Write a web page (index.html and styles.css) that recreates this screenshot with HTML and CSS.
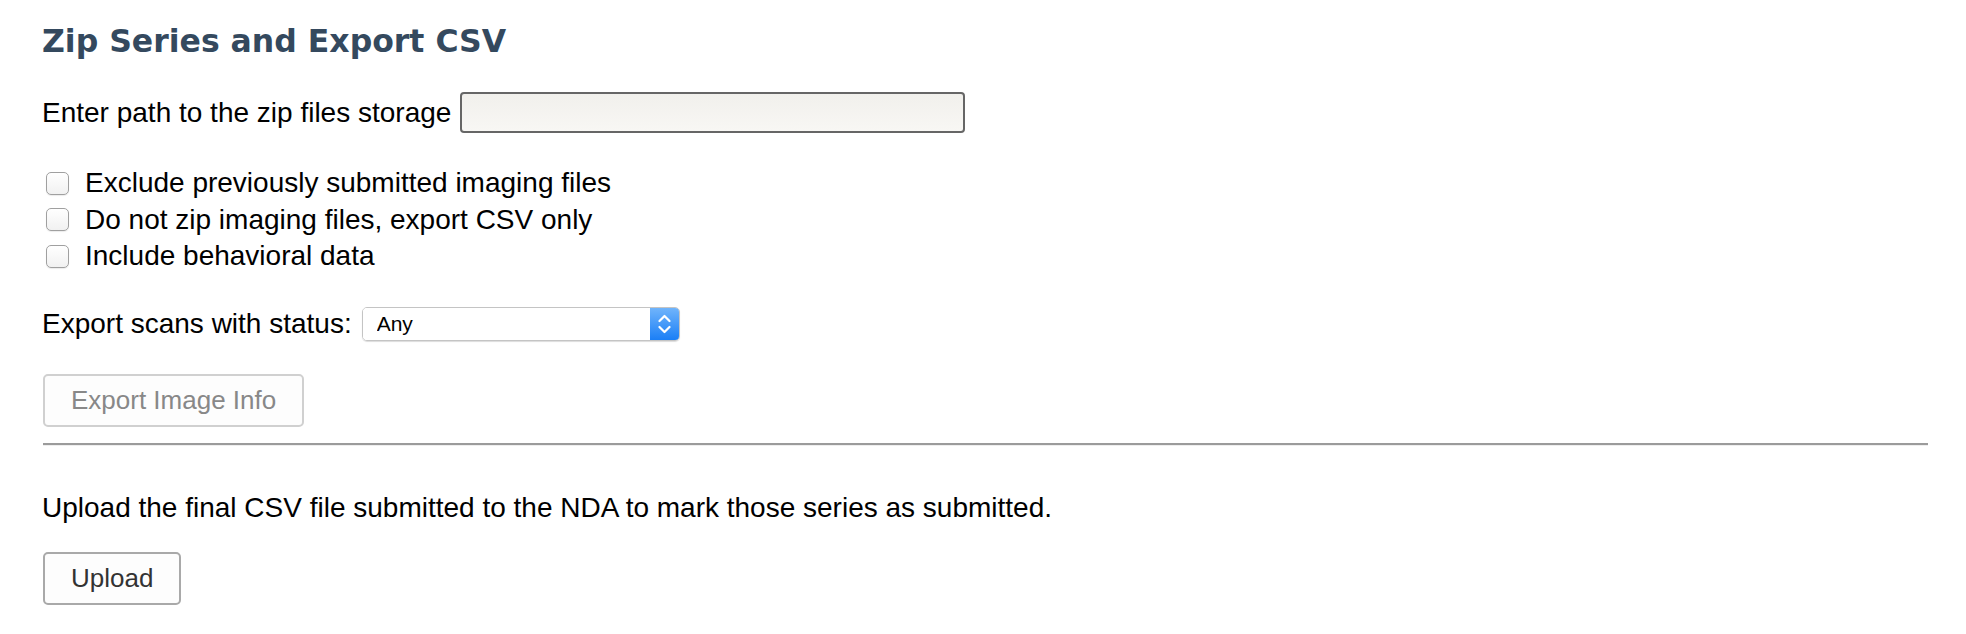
FILE: index.html
```html
<!DOCTYPE html>
<html lang="en">
<head>
    <meta charset="UTF-8">
    <meta name="viewport" content="width=device-width, initial-scale=1.0">
    <title>Zip Series and Export CSV</title>
    <link rel="stylesheet" href="styles.css">
</head>
<body>
    <div class="page">
        <h2 class="title">Zip Series and Export CSV</h2>

        <div class="path-row">
            <label for="zipPath">Enter path to the zip files storage</label>
            <input type="text" id="zipPath" class="path-input">
        </div>

        <div class="options">
            <label class="option"><input type="checkbox" id="excludeSubmitted"><span>Exclude previously submitted imaging files</span></label>
            <label class="option"><input type="checkbox" id="csvOnly"><span>Do not zip imaging files, export CSV only</span></label>
            <label class="option"><input type="checkbox" id="behavioral"><span>Include behavioral data</span></label>
        </div>

        <div class="status-row">
            <label for="status">Export scans with status:</label>
            <div class="select-box">
                <select id="status">
                    <option>Any</option>
                    <option>Pass</option>
                    <option>Fail</option>
                </select>
                <span class="select-arrow">
                    <svg width="13" height="20" viewBox="0 0 13 20">
                        <path d="M1.5 7 L6.5 2 L11.5 7" fill="none" stroke="#fff" stroke-width="2.2" stroke-linecap="round" stroke-linejoin="round"/>
                        <path d="M1.5 13 L6.5 18 L11.5 13" fill="none" stroke="#fff" stroke-width="2.2" stroke-linecap="round" stroke-linejoin="round"/>
                    </svg>
                </span>
            </div>
        </div>

        <button class="btn" id="exportBtn" disabled>Export Image Info</button>

        <hr class="divider">

        <p class="upload-note">Upload the final CSV file submitted to the NDA to mark those series as submitted.</p>
        <button class="btn" id="uploadBtn">Upload</button>
    </div>
</body>
</html>
```

FILE: styles.css
```css
body {
    margin: 0;
    background: #fff;
    color: #000;
    font-family: "Liberation Sans", Arial, Helvetica, sans-serif;
    font-size: 28px;
}
.page {
    padding: 23px 38px 0 42px;
    display: flex;
    flex-direction: column;
    align-items: flex-start;
}
.title {
    margin: 0;
    font-family: "DejaVu Sans", Verdana, sans-serif;
    font-size: 31.5px;
    font-weight: bold;
    line-height: 37px;
    color: #34495e;
}
.path-row {
    margin-top: 32px;
    display: flex;
    align-items: center;
    gap: 9px;
    line-height: 32px;
}
.path-input {
    box-sizing: border-box;
    width: 505px;
    height: 41px;
    margin: 0;
    border: 2px solid #666;
    border-radius: 4px;
    background: linear-gradient(#f1f0ec, #f8f7f4);
    font-size: 22px;
}
.options {
    margin-top: 32px;
    display: flex;
    flex-direction: column;
}
.option {
    height: 36.5px;
    display: flex;
    align-items: center;
    gap: 16px;
    line-height: 32px;
}
.option input {
    appearance: none;
    box-sizing: border-box;
    width: 23px;
    height: 23px;
    margin: 0 0 0 4px;
    border: 1px solid #a0a0a0;
    border-radius: 5px;
    background: linear-gradient(#fff, #f1f1f1);
    box-shadow: 0 1px 1px rgba(0, 0, 0, 0.08);
}
.status-row {
    margin-top: 32px;
    display: flex;
    align-items: center;
    gap: 10px;
    line-height: 32px;
}
.select-box {
    display: flex;
    width: 318px;
    height: 34px;
    box-sizing: border-box;
    border: 1px solid #c4c4c4;
    border-radius: 5px;
    box-shadow: 0 1px 1px rgba(0, 0, 0, 0.14);
    overflow: hidden;
}
.select-box select {
    appearance: none;
    flex: 1;
    border: none;
    outline: none;
    margin: 0;
    padding: 0 0 0 14px;
    background: #fff;
    font-family: "Liberation Sans", Arial, sans-serif;
    font-size: 21px;
    color: #000;
}
.select-arrow {
    width: 29px;
    display: flex;
    align-items: center;
    justify-content: center;
    background: linear-gradient(#70b4fb, #1b7ff6);
}
.btn {
    box-sizing: border-box;
    height: 53px;
    padding: 0 26px;
    margin: 0 0 0 1px;
    border: 2px solid #a9a9a9;
    border-radius: 5px;
    background: #fdfdfd;
    color: #333;
    font-family: "Liberation Sans", Arial, sans-serif;
    font-size: 26px;
}
#exportBtn {
    margin-top: 33px;
}
.btn:disabled {
    border-color: #d0d0d0;
    color: #888;
}
.divider {
    align-self: stretch;
    margin: 16px 0 0 1px;
    height: 0;
    border: none;
    border-top: 2px solid #9b9b9b;
    border-bottom: 1px solid #eee;
}
.upload-note {
    margin: 46px 0 0 0;
    line-height: 32px;
}
#uploadBtn {
    margin-top: 28px;
}
```
